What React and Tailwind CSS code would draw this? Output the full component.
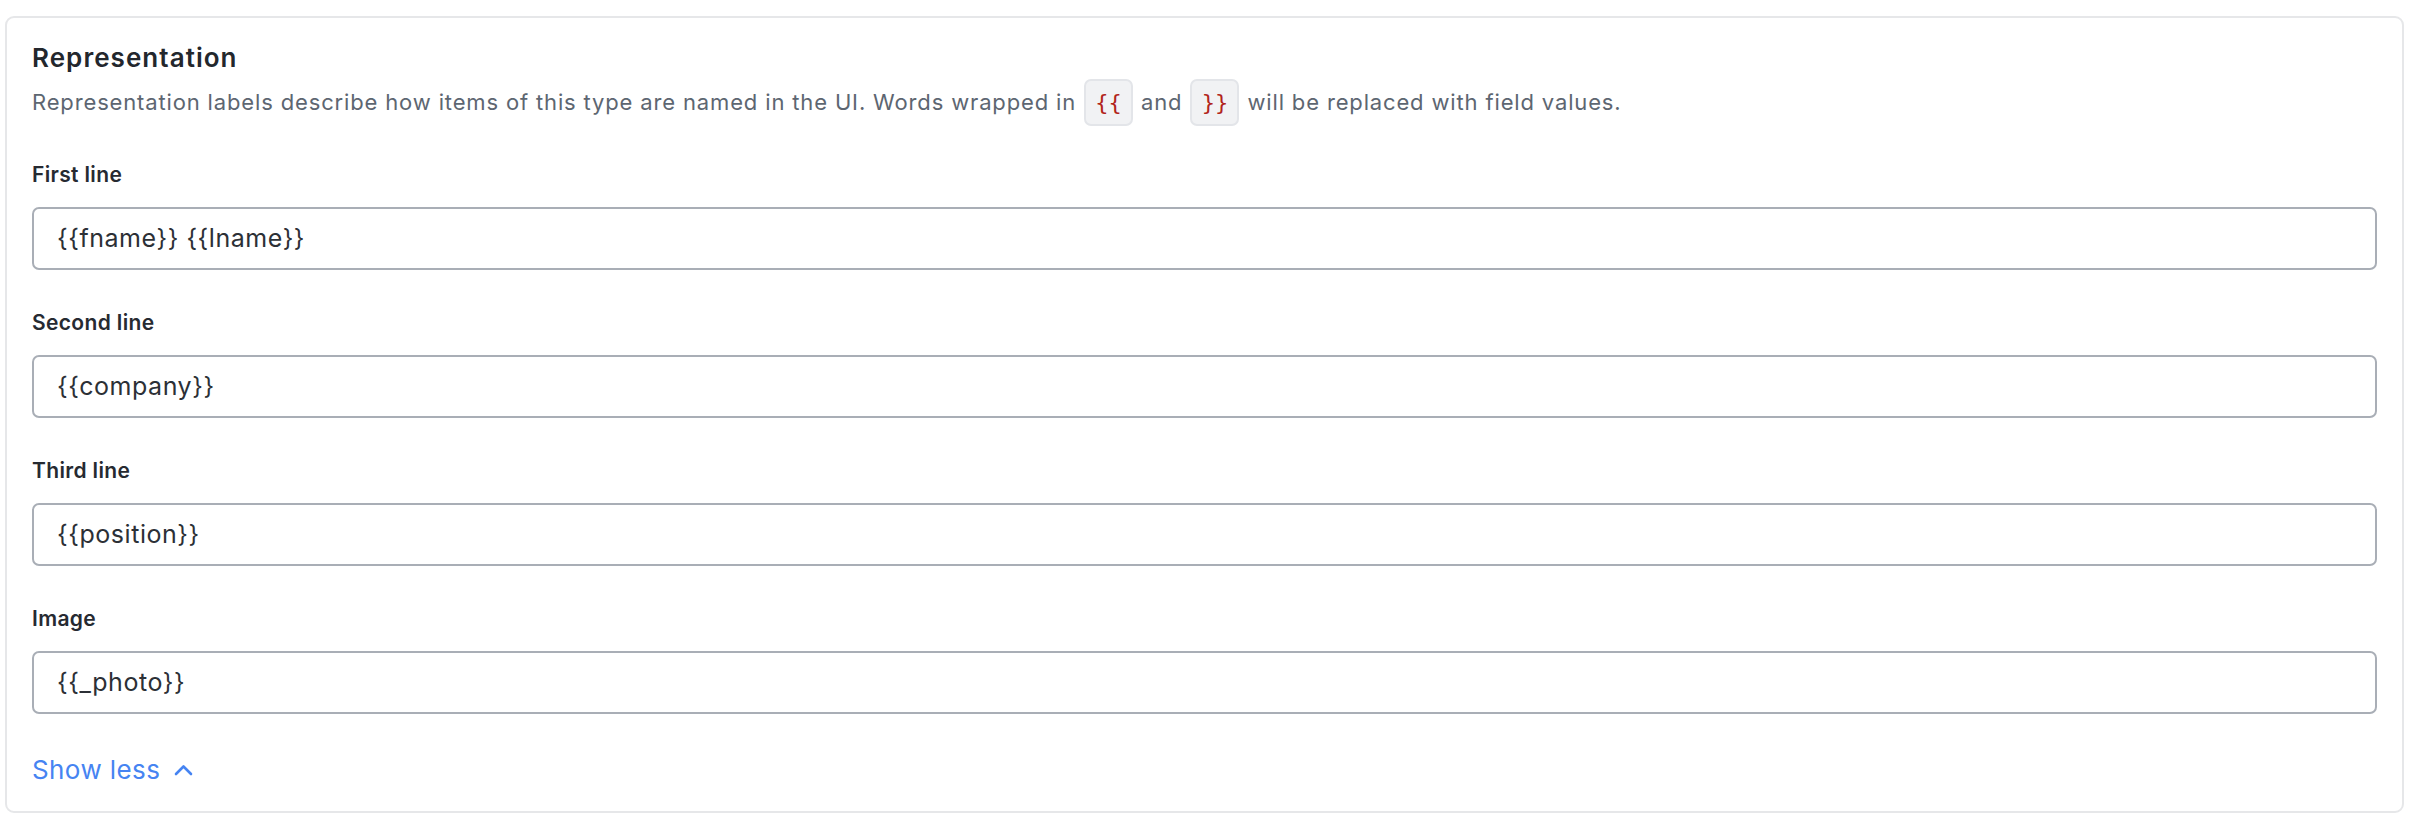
import React from 'react';

const fields = [
  { label: 'First line', value: '{{fname}} {{lname}}' },
  { label: 'Second line', value: '{{company}}' },
  { label: 'Third line', value: '{{position}}' },
  { label: 'Image', value: '{{_photo}}' },
];

const Code = ({ children }) => (
  <span className="inline-flex items-center justify-center h-[47px] w-[49px] mx-[8px] rounded-[7px] border-2 border-[#e3e5e9] bg-[#f1f2f4] text-[22px] tracking-normal text-[#b1241a] font-['DejaVu_Sans_Mono',monospace]">
    {children}
  </span>
);

const App = () => {
  return (
    <div className="w-[2416px] h-[830px] bg-white pl-[5px] pt-[16px] font-['Inter','Noto_Sans',sans-serif]">
      <div className="w-[2399px] h-[797px] border-2 border-[#e6e7e9] rounded-[9px] pl-[25px] pr-[25px] pt-[24px]">
        <h2 className="text-[26px] leading-[32px] font-semibold text-[#23272d] tracking-[1.05px]">Representation</h2>
        <div className="flex items-center h-[47px] mt-[5px] text-[22px] tracking-[0.85px] text-[#5d6671]">
          <span>Representation labels describe how items of this type are named in the UI. Words wrapped in</span>
          <Code>{'{{'}</Code>
          <span>and</span>
          <Code>{'}}'}</Code>
          <span>will be replaced with field values.</span>
        </div>

        <div className="mt-[35px] flex flex-col gap-[39px]">
          {fields.map((f) => (
            <div key={f.label} className="flex flex-col gap-[18px]">
              <label className="text-[21px] leading-[28px] font-semibold text-[#262a31] tracking-[0.35px]">{f.label}</label>
              <div className="h-[63px] flex items-center border-2 border-[#a9aeb6] rounded-[7px] pl-[23px] text-[25px] tracking-[0.55px] text-[#2c3036]">
                {f.value}
              </div>
            </div>
          ))}
        </div>

        <button className="mt-[40px] flex items-center gap-[14px] text-[26px] leading-[32px] tracking-[0.4px] text-[#4684f2]">
          <span>Show less</span>
          <svg width="19" height="12" viewBox="0 0 19 12" fill="none" stroke="currentColor" strokeWidth="2.6" strokeLinecap="round" strokeLinejoin="round">
            <polyline points="2,10 9.5,2.5 17,10" />
          </svg>
        </button>
      </div>
    </div>
  );
};

export default App;
